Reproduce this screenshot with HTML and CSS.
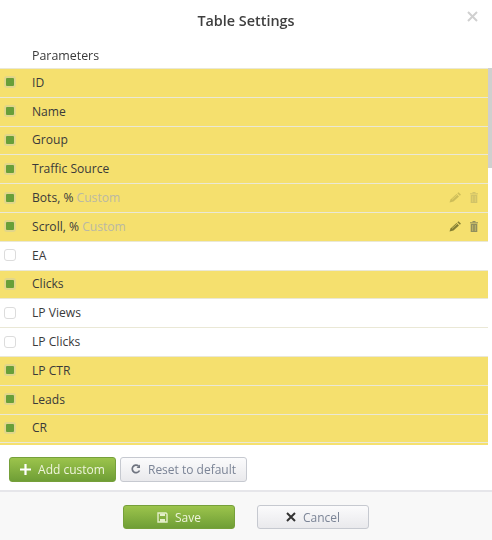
FILE: index.html
```html
<!DOCTYPE html>
<html lang="en">
<head>
<meta charset="utf-8">
<title>Table Settings</title>
<link rel="stylesheet" href="styles.css">
</head>
<body>
<div class="modal">
  <header class="head">
    <h1 class="title">Table Settings</h1>
    <svg class="close" width="11" height="11" viewBox="0 0 11 11"><path d="M1 1l9 9M10 1l-9 9" stroke="#d0d0d0" stroke-width="2" fill="none"/></svg>
  </header>
  <div class="params-label">Parameters</div>
  <div class="list-wrap">
    <div class="list">
      <div class="row on"><span class="check"></span><span class="name">ID</span></div>
      <div class="row on"><span class="check"></span><span class="name">Name</span></div>
      <div class="row on"><span class="check"></span><span class="name">Group</span></div>
      <div class="row on"><span class="check"></span><span class="name">Traffic Source</span></div>
      <div class="row on"><span class="check"></span><span class="name">Bots, % <em class="tag">Custom</em></span>
        <span class="actions faded">
          <svg width="12" height="11" viewBox="0 0 12 11"><path d="M.5 10.500l1-3L7.500 2l2.500 2.500-5.500 5z" fill="#857f33"/><path d="M8.300 1.300L9.500.3 12 2.800l-1.200 1z" fill="#857f33"/><path d="M3 7.500l5-4.500" stroke="#c9bb58" stroke-width="1"/></svg>
          <svg width="8" height="11" viewBox="0 0 8 11"><path d="M0 1.200h8v1H0zM2.500 0h3v1h-3zM.7 2.800h6.600V11H.7z" fill="#918f5e"/><path d="M2.700 4v6M5.300 4v6" stroke="#d8c868" stroke-width=".7"/></svg>
        </span>
      </div>
      <div class="row on"><span class="check"></span><span class="name">Scroll, % <em class="tag">Custom</em></span>
        <span class="actions">
          <svg width="12" height="11" viewBox="0 0 12 11"><path d="M.5 10.500l1-3L7.500 2l2.500 2.500-5.500 5z" fill="#857f33"/><path d="M8.300 1.300L9.500.3 12 2.800l-1.200 1z" fill="#857f33"/><path d="M3 7.500l5-4.500" stroke="#c9bb58" stroke-width="1"/></svg>
          <svg width="8" height="11" viewBox="0 0 8 11"><path d="M0 1.200h8v1H0zM2.500 0h3v1h-3zM.7 2.800h6.600V11H.7z" fill="#918f5e"/><path d="M2.700 4v6M5.300 4v6" stroke="#d8c868" stroke-width=".7"/></svg>
        </span>
      </div>
      <div class="row"><span class="check"></span><span class="name">EA</span></div>
      <div class="row on"><span class="check"></span><span class="name">Clicks</span></div>
      <div class="row"><span class="check"></span><span class="name">LP Views</span></div>
      <div class="row"><span class="check"></span><span class="name">LP Clicks</span></div>
      <div class="row on"><span class="check"></span><span class="name">LP CTR</span></div>
      <div class="row on"><span class="check"></span><span class="name">Leads</span></div>
      <div class="row on last"><span class="check"></span><span class="name">CR</span></div>
    </div>
    <div class="scrollbar"></div>
  </div>
  <div class="tools">
    <button class="btn green add">
      <svg width="11" height="11" viewBox="0 0 11 11"><path d="M5.500 0v11M0 5.500h11" stroke="#fff" stroke-width="2.200"/></svg>
      <span>Add custom</span>
    </button>
    <button class="btn grey reset">
      <svg width="10" height="10" viewBox="0 0 10 10"><path d="M8.500 6.500A3.800 3.800 0 1 1 7.500 2" stroke="#6f7480" stroke-width="1.700" fill="none"/><path d="M9 .5v3.500H5.500z" fill="#6f7480"/></svg>
      <span>Reset to default</span>
    </button>
  </div>
  <footer class="foot">
    <button class="btn green wide">
      <svg width="11" height="11" viewBox="0 0 11 11"><path d="M1 1h8l1 1v8H1z" fill="none" stroke="#e4efc9" stroke-width="1.400"/><path d="M3 1.500h5v2.500H3zM3 7h5v3H3z" fill="#e4efc9"/></svg>
      <span>Save</span>
    </button>
    <button class="btn grey wide">
      <svg width="10" height="10" viewBox="0 0 10 10"><path d="M1 1l8 8M9 1l-8 8" stroke="#333" stroke-width="2"/></svg>
      <span>Cancel</span>
    </button>
  </footer>
</div>
</body>
</html>
```
FILE: styles.css
```css
* { box-sizing: border-box; }
html, body { margin: 0; padding: 0; }
body {
  width: 492px;
  height: 540px;
  overflow: hidden;
  background: #fff;
  font-family: "Open Sans", "Liberation Sans", sans-serif;
  font-size: 12px;
  color: #3a3a3a;
}
.modal { width: 492px; height: 540px; display: flex; flex-direction: column; filter: blur(.3px); }
.head { height: 44px; display: flex; justify-content: center; position: relative; padding-top: 10px; }
.title { margin: 0; font-size: 14.400px; line-height: 21px; font-weight: 600; color: #3f3f3f; }
.close { position: absolute; right: 14px; top: 11px; }
.params-label { height: 24px; padding: 3px 0 0 32px; line-height: 18px; font-size: 12.400px; color: #3a3a3a; }
.list-wrap { height: 376.700px; position: relative; overflow: hidden; }
.list { width: 488px; background: #f5e06e; }
.row {
  height: 28.800px;
  display: flex;
  align-items: center;
  border-top: 1px solid #eae8d6;
  padding: 0 0 1px 4px;
  background: #fff;
}
.row.on { background: #f5e06e; }
.row.last { height: 31.500px; padding-bottom: 3.700px; position: relative; }
.row.last::after { content: ""; position: absolute; left: 0; right: 0; top: 27.800px; height: 1px; background: #eae8d6; }
.check {
  width: 12px;
  height: 12px;
  flex: none;
  border: 1px solid #dcdcdc;
  border-radius: 3px;
  background: #fff;
  margin-right: 16px;
}
.row.on .check {
  background: #689f38;
  border: 2px solid #e1d68a;
}
.name { color: #3a3a3a; line-height: 17px; flex: 1; font-size: 12.100px; }
.tag { font-style: normal; color: #bab9a4; }
.actions { display: flex; align-items: center; gap: 9px; padding-right: 10px; }
.actions.faded { opacity: .35; }
.scrollbar { position: absolute; right: 0; top: 0; width: 4px; height: 100px; background: #cfd0cf; }
.tools { height: 47.300px; display: flex; align-items: center; gap: 4px; padding: 4px 0 0 9px; border-bottom: 2px solid #e6e6ea; }
.btn {
  font: inherit;
  display: flex;
  align-items: center;
  justify-content: center;
  gap: 7px;
  height: 24.500px;
  padding: 0;
  border-radius: 3px;
}
.green { color: #eef4dc; background: linear-gradient(#9cc44c, #6f9e36); border: 1px solid #76a03a; }
.grey { color: #7b8496; background: linear-gradient(#fbfbfc, #e9e9ec); border: 1px solid #c6c9d0; }
.add { width: 107px; }
.reset { width: 127px; }
.foot { flex: 1; background: #f8f8f8; display: flex; justify-content: center; align-items: flex-start; gap: 22px; padding: 13px 0 0 0; }
.wide { width: 112px; }
```
